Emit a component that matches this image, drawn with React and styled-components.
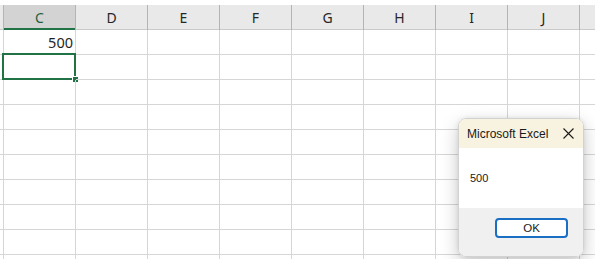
import styled, { createGlobalStyle } from "styled-components";

const GlobalStyle = createGlobalStyle`
  html, body {
    margin: 0;
    padding: 0;
    background: #ffffff;
    overflow: hidden;
  }
  body {
    font-family: "Noto Sans", "Liberation Sans", sans-serif;
  }
`;

const Sheet = styled.div`
  position: relative;
  width: 595px;
  height: 259px;
  overflow: hidden;
  background: #ffffff;
  padding-top: 5px;
  box-sizing: border-box;
`;

const Row = styled.div`
  display: flex;
  width: max-content;
`;

const HeadCell = styled.div`
  flex: 0 0 ${(p) => p.$w}px;
  height: 25px;
  box-sizing: border-box;
  display: flex;
  align-items: center;
  justify-content: center;
  font-size: 14px;
  color: ${(p) => (p.$active ? "#1f5f40" : "#262626")};
  background: ${(p) => (p.$active ? "#d3d3d3" : "#e9e9e9")};
  border-right: 1px solid #b4b4b4;
  box-shadow: ${(p) =>
    p.$active ? "inset 0 -2px 0 #217346" : "inset 0 -1px 0 #c9c9c9"};
`;

const Cell = styled.div`
  position: relative;
  flex: 0 0 ${(p) => p.$w}px;
  height: 25px;
  box-sizing: border-box;
  border-right: 1px solid #d6d6d6;
  border-bottom: 1px solid #d6d6d6;
  display: flex;
  align-items: center;
  justify-content: flex-end;
  padding: 0 2px 0 0;
  font-size: 14.5px;
  color: #1f1f1f;
`;

const Selection = styled.div`
  position: absolute;
  top: -2px;
  left: -2px;
  right: -1px;
  bottom: -1px;
  border: 2px solid #217346;
  pointer-events: none;
`;

const Handle = styled.div`
  position: absolute;
  right: -4px;
  bottom: -4px;
  width: 5px;
  height: 5px;
  background: #217346;
  outline: 1px solid #ffffff;
`;

const Dialog = styled.div`
  position: absolute;
  left: 458px;
  top: 118px;
  width: 126px;
  height: 139px;
  border-radius: 8px;
  overflow: hidden;
  border: 1px solid #d2d2d2;
  box-sizing: border-box;
  box-shadow: 0 6px 18px rgba(0, 0, 0, 0.22), 0 0 4px rgba(0, 0, 0, 0.08);
  display: flex;
  flex-direction: column;
  font-family: "Segoe UI", "Liberation Sans", sans-serif;
`;

const TitleBar = styled.div`
  height: 29px;
  background: #f8f2e0;
  display: flex;
  align-items: center;
  justify-content: space-between;
  padding: 0 9px 0 8px;
  font-size: 12px;
  color: #1a1a1a;
`;

const Message = styled.div`
  height: 60px;
  background: #ffffff;
  display: flex;
  align-items: center;
  padding-left: 11px;
  font-size: 11px;
  color: #1a1a1a;
`;

const Footer = styled.div`
  flex: 1;
  background: #f0f0f0;
  display: flex;
  justify-content: flex-end;
  align-items: flex-start;
  padding: 10px 15px 0 0;
`;

const OkButton = styled.button`
  width: 73px;
  height: 20px;
  box-sizing: border-box;
  border: 2px solid #1a6fc4;
  border-radius: 4px;
  background: #ffffff;
  font-family: "Segoe UI", "Liberation Sans", sans-serif;
  font-size: 11.5px;
  color: #1a1a1a;
  padding: 0;
  display: flex;
  align-items: center;
  justify-content: center;
`;

// K is only partly on screen, its letter falls outside the window
const cols = ["C", "D", "E", "F", "G", "H", "I", "J", ""];
const rows = Array.from({ length: 10 }, (_, i) => i);

const CloseIcon = () => (
  <svg width="11" height="11" viewBox="0 0 11 11">
    <path d="M0.5 0.5 L10.5 10.5 M10.5 0.5 L0.5 10.5" stroke="#1a1a1a" strokeWidth="1.1" fill="none" />
  </svg>
);

export default function App() {
  return (
    <>
      <GlobalStyle />
      <Sheet>
        <Row>
          <HeadCell $w={4} />
          {cols.map((c, i) => (
            <HeadCell key={i} $w={72} $active={c === "C"}>
              {c}
            </HeadCell>
          ))}
        </Row>
        {rows.map((r) => (
          <Row key={r}>
            <Cell $w={4} />
            {cols.map((c, i) => (
              <Cell key={i} $w={72}>
                {r === 0 && c === "C" && "500"}
                {r === 1 && c === "C" && (
                  <Selection>
                    <Handle />
                  </Selection>
                )}
              </Cell>
            ))}
          </Row>
        ))}
        <Dialog>
          <TitleBar>
            <span>Microsoft Excel</span>
            <CloseIcon />
          </TitleBar>
          <Message>500</Message>
          <Footer>
            <OkButton>OK</OkButton>
          </Footer>
        </Dialog>
      </Sheet>
    </>
  );
}
